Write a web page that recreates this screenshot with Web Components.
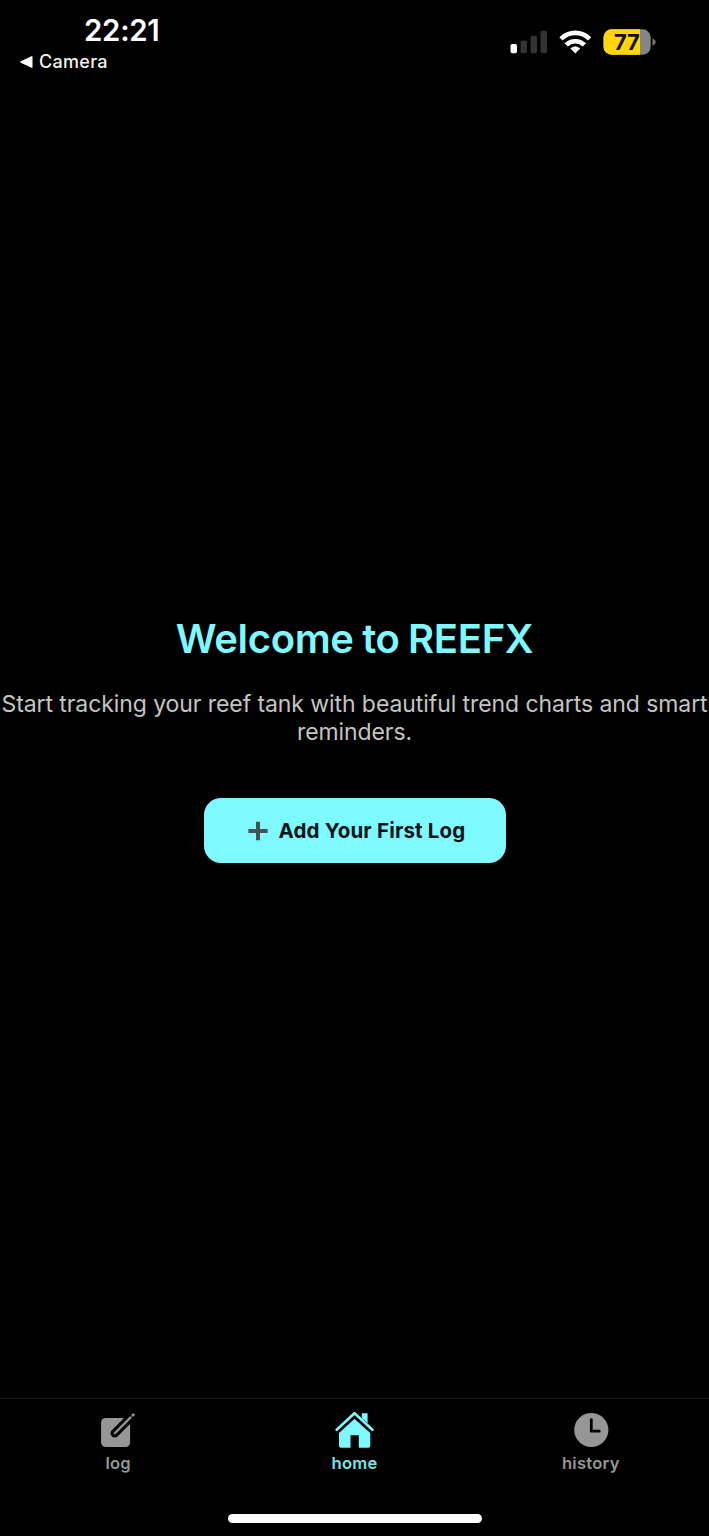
<!DOCTYPE html>
<html lang="en">
<head>
<meta charset="utf-8">
<title>REEFX</title>
<style>
html,body{margin:0;height:100%;background:#000}
body{font-family:Inter,"Liberation Sans",sans-serif;color:#fff;overflow:hidden}
</style>
</head>
<body>
<reef-app></reef-app>
<script>
const define = (name, html) => customElements.define(name, class extends HTMLElement {
  constructor() {
    super();
    const t = document.createElement('template');
    t.innerHTML = html;
    this.attachShadow({mode: 'open'}).append(t.content.cloneNode(true));
  }
});

define('status-bar', `
<style>
:host{display:flex;justify-content:space-between;height:98px;box-sizing:border-box;padding:12px 52px 0 20px}
.left{display:flex;flex-direction:column}
.time{font-size:29.5px;font-weight:600;line-height:37px;height:36px;padding-left:64px;letter-spacing:-.3px;white-space:nowrap}
.back{display:flex;align-items:center;gap:6px;height:28px;font-size:18px;font-weight:500;letter-spacing:.3px;color:#f2f2f2}
.back span{line-height:22px;margin-top:-1px}
.right{display:flex;height:60px;align-items:center}
svg{display:block}
.bat{font:700 22px Inter,sans-serif;letter-spacing:-.2px}
</style>
<div class="left"><div class="time">22:21</div>
<div class="back"><svg width="13" height="14" viewBox="0 0 13 14"><path d="M.8 6.3 11.5 1.2q1-.4 1 .6v10.4q0 1-1 .6L.8 7.7q-1.2-.7 0-1.4z" fill="#fff"/></svg><span>Camera</span></div></div>
<div class="right"><svg width="147" height="32" viewBox="510 26 147 32">
<rect x="510.5" y="44" width="6.5" height="9.3" rx="1.8" fill="#fff"/>
<g fill="#333"><rect x="520.5" y="40.5" width="6.5" height="12.8" rx="1.8"/><rect x="530.5" y="35.7" width="6.5" height="17.6" rx="1.8"/><rect x="540.5" y="30.7" width="6.5" height="22.6" rx="1.8"/></g>
<g fill="none" stroke="#fff" stroke-width="4.6"><path d="M561 38.8a20.3 20.3 0 0 1 28.6 0"/><path d="M566.2 44.9a13 13 0 0 1 18.2 0"/></g>
<path d="M575.3 53l-4.6-4.4q4.6-3.7 9.2 0z" fill="#fff" stroke="#fff" stroke-width=".7" stroke-linejoin="round"/>
<clipPath id="b"><rect x="603.5" y="29.3" width="47.2" height="25.4" rx="8"/></clipPath>
<g clip-path="url(#b)"><path fill="#858585" d="M603 29h48v26h-48z"/><path fill="#ffd60a" d="M603 29h37v26h-37z"/></g>
<path d="M652.5 38.2q3.2 1.4 3.2 3.8t-3.2 3.8z" fill="#777"/>
<text class="bat" x="614" y="50.2" fill="#141000">77</text>
</svg></div>`);

define('welcome-panel', `
<style>
:host{display:flex;flex-direction:column;align-items:center;flex:1;padding-top:514px;text-align:center}
h1{margin:0;font-size:40px;line-height:54px;font-weight:640;color:#7df9ff;letter-spacing:-.32px;word-spacing:-1.3px;white-space:nowrap}
p{margin:24px 0 0;font-size:23px;line-height:28px;color:#c4c4c4;white-space:nowrap;letter-spacing:-.08px}
</style>
<h1>Welcome to REEFX</h1>
<p>Start tracking your reef tank with beautiful trend charts and smart<br>reminders.</p>
<slot></slot>`);

define('action-button', `
<style>
:host{display:block;margin-top:52px}
button{display:flex;align-items:center;width:302px;height:65px;box-sizing:border-box;padding:0 0 0 44px;border:0;border-radius:17px;background:#7df9ff;color:#001416;font:650 20.5px Inter,sans-serif;letter-spacing:.18px;white-space:nowrap}
svg{margin-right:11px;flex:none}
</style>
<button><svg width="20" height="20" viewBox="0 0 20 20"><path d="M8 .8h4V8h7.6v4H12v7.2H8V12H.4V8H8z" fill="#455154"/></svg><slot></slot></button>`);

define('tab-item', `
<style>
:host{display:flex;flex-direction:column;align-items:center;flex:1;padding-top:11px;color:#969696}
:host([active]){color:#7df9ff}
.label{font-size:16.6px;line-height:20px;font-weight:600;margin-top:3px;letter-spacing:.25px}
:host([active]) .label{color:#78e5ea}
</style>
<slot name="icon"></slot><div class="label"><slot></slot></div>`);

define('tab-bar', `
<style>
:host{display:flex;height:138px;box-sizing:border-box;border-top:1px solid #1e1e1e;position:relative}
svg{display:block}
.grip{position:absolute;left:228px;bottom:13px;width:254px;height:9px;border-radius:5px;background:#fff}
</style>
<tab-item><svg slot="icon" width="40" height="40" viewBox="98.2 1410 40 40"><rect x="101.3" y="1418" width="29" height="29" rx="4.6" fill="currentColor"/><path d="M115 1433.2 133 1415.2" stroke="#000" stroke-width="8.4" stroke-linecap="round"/><path d="M115 1433.2 130.8 1417.4" stroke="currentColor" stroke-width="2.2" stroke-linecap="round"/><path d="M133 1415.2l.6-.6" stroke="currentColor" stroke-width="2.7" stroke-linecap="round"/></svg>log</tab-item>
<tab-item active><svg slot="icon" width="40" height="40" viewBox="334.2 1410 40 40"><path fill="currentColor" d="M362 1413.2h5.8v10l-5.8-5.3zM354.7 1415.6 370.5 1430v15.7a2 2 0 0 1-2 2H359v-12.5h-8.3v12.5h-9.5a2 2 0 0 1-2-2V1430z"/><path fill="none" stroke="#000" stroke-width="5.2" d="M336.8 1431.7 354.7 1415.3 372.7 1431.7"/><path fill="none" stroke="currentColor" stroke-width="2.6" stroke-linecap="round" stroke-linejoin="round" d="M336.9 1429.8 354.7 1413.3 372.6 1429.8"/></svg>home</tab-item>
<tab-item><svg slot="icon" width="40" height="40" viewBox="571 1410 40 40"><circle cx="591.3" cy="1430" r="17.1" fill="currentColor"/><path d="M591.3 1419.6v11.6h8" fill="none" stroke="#000" stroke-width="2.8" stroke-linecap="round" stroke-linejoin="round"/></svg>history</tab-item>
<div class="grip"></div>`);

define('reef-app', `
<style>:host{display:flex;flex-direction:column;width:709px;height:1536px;background:#000}</style>
<status-bar></status-bar>
<welcome-panel><action-button>Add Your First Log</action-button></welcome-panel>
<tab-bar></tab-bar>`);
</script>
</body>
</html>
